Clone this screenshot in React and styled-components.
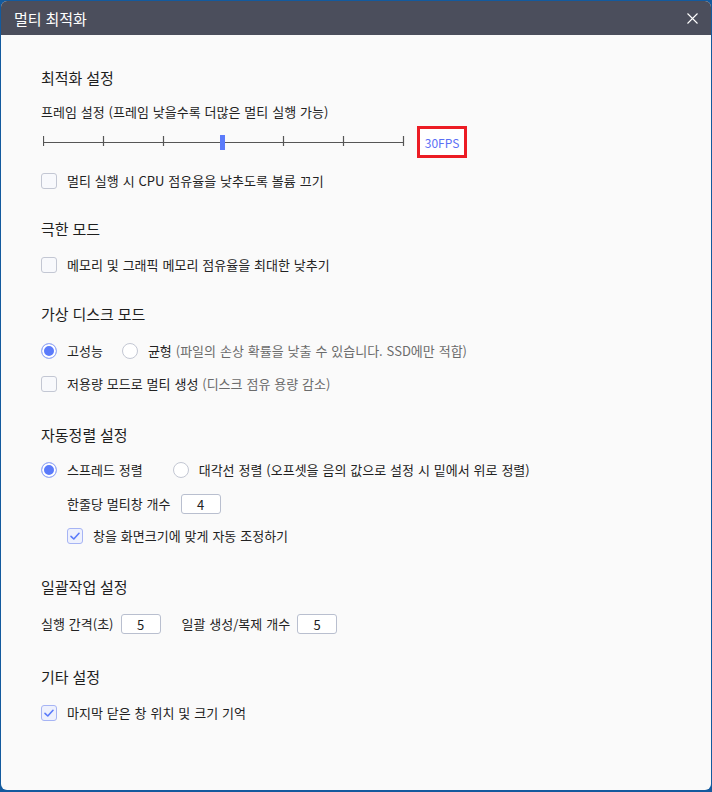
import React from "react";
import styled, { createGlobalStyle } from "styled-components";

const Global = createGlobalStyle`
  html, body { margin: 0; padding: 0; height: 100%; }
  #root { height: 100%; }
  body { font-family: "Noto Sans CJK KR", "Noto Sans", sans-serif; background: #135a9e; }
`;

const Frame = styled.div`
  box-sizing: border-box;
  height: 100vh;
  padding: 1px 1px 2px 1px;
  background: #135a9e;
  display: flex;
`;

const Window = styled.div`
  flex: 1;
  display: flex;
  flex-direction: column;
  background: #fafafa;
  border-radius: 6px;
  overflow: hidden;
`;

const TitleBar = styled.div`
  height: 34px;
  flex: none;
  background: #4b4e5c;
  display: flex;
  align-items: center;
  justify-content: space-between;
  padding: 0 13px 0 13px;
  color: #fff;
  font-size: 15px;
  word-spacing: 0.5px;
`;

const CloseBtn = styled.button`
  border: 0;
  background: transparent;
  padding: 0;
  width: 12px;
  height: 12px;
  display: flex;
  align-items: center;
  justify-content: center;
  cursor: pointer;
`;

const Content = styled.div`
  padding: 33px 40px 0 40px;
  display: flex;
  flex-direction: column;
  color: #222;
  font-size: 13px;
  word-spacing: 1px;
`;

const SectionTitle = styled.div`
  height: 20px;
  line-height: 20px;
  font-size: 15px;
  word-spacing: 0.5px;
  color: #1e1e1e;
  margin-top: ${(p) => p.$mt || 0}px;
`;

const Row = styled.div`
  display: flex;
  align-items: center;
  height: ${(p) => p.$h || 20}px;
  margin-top: ${(p) => p.$mt || 0}px;
  margin-left: ${(p) => p.$indent || 0}px;
  white-space: nowrap;
`;

const Text = styled.span`
  line-height: 20px;
  color: ${(p) => (p.$muted ? "#6b6b6b" : "#222")};
`;

const Box = styled.span`
  box-sizing: border-box;
  width: 16px;
  height: 16px;
  flex: none;
  border-radius: 3px;
  border: 1px solid ${(p) => (p.$checked ? "#a6b4f4" : "#c3c7d3")};
  background: ${(p) => (p.$checked ? "#eef1fd" : "#f8f9fc")};
  display: flex;
  align-items: center;
  justify-content: center;
  margin-right: 10px;
`;

const Radio = styled.span`
  box-sizing: border-box;
  width: 16px;
  height: 16px;
  flex: none;
  border-radius: 50%;
  border: 1px solid ${(p) => (p.$checked ? "#9fb0f5" : "#c3c7d3")};
  background: ${(p) => (p.$checked ? "#5b7bfa" : "#fff")};
  box-shadow: ${(p) => (p.$checked ? "inset 0 0 0 2px #fff" : "none")};
  margin-right: 10px;
`;

const RadioItem = styled.label`
  display: flex;
  align-items: center;
  margin-right: ${(p) => p.$gap || 0}px;
`;

const NumBox = styled.span`
  box-sizing: border-box;
  width: 40px;
  height: 20px;
  border: 1px solid #b9bfcf;
  border-radius: 3px;
  background: #fff;
  display: flex;
  align-items: center;
  justify-content: center;
  font-size: 13px;
  color: #222;
  margin-left: ${(p) => p.$ml || 0}px;
  margin-right: ${(p) => p.$mr || 0}px;
`;

const SliderWrap = styled.div`
  margin-left: 2px;
  width: 362px;
  height: 32px;
  display: flex;
`;

const FpsBox = styled.div`
  box-sizing: border-box;
  margin-left: 12px;
  width: 50px;
  height: 32px;
  border: 3px solid #ec1c24;
  background: #fff;
  color: #5b6ff5;
  font-size: 12px;
  word-spacing: 0;
  display: flex;
  align-items: center;
  justify-content: center;
`;

const Check = () => (
  <svg width="12" height="12" viewBox="0 0 12 12">
    <polyline points="2,6.3 4.8,9 10,3.3" fill="none" stroke="#5b7bfa" strokeWidth="1.6" strokeLinecap="round" strokeLinejoin="round" />
  </svg>
);

const Checkbox = ({ checked, children, indent, mt }) => (
  <Row $indent={indent} $mt={mt}>
    <Box $checked={checked}>{checked && <Check />}</Box>
    {children}
  </Row>
);

const Slider = () => {
  const ticks = [0, 1, 2, 3, 4, 5, 6];
  return (
    <SliderWrap>
      <svg width="362" height="32" viewBox="0 0 362 32">
        <line x1="0.5" y1="16.5" x2="360.5" y2="16.5" stroke="#555" strokeWidth="1.2" />
        {ticks.map((i) =>
          i === 3 ? null : (
            <line key={i} x1={i * 60 + 0.5} y1="10" x2={i * 60 + 0.5} y2="20" stroke="#555" strokeWidth="1.2" />
          )
        )}
        <rect x="177" y="9" width="5" height="15" fill="#5b7bfa" />
      </svg>
    </SliderWrap>
  );
};

export default function App() {
  return (
    <>
      <Global />
      <Frame>
        <Window>
          <TitleBar>
            <span>멀티 최적화</span>
            <CloseBtn aria-label="닫기">
              <svg width="11" height="11" viewBox="0 0 11 11">
                <path d="M0.5 0.5 L10.5 10.5 M10.5 0.5 L0.5 10.5" stroke="#fff" strokeWidth="1.1" />
              </svg>
            </CloseBtn>
          </TitleBar>
          <Content>
            <SectionTitle>최적화 설정</SectionTitle>
            <Row $mt={14}>
              <Text>프레임 설정 (프레임 낮을수록 더많은 멀티 실행 가능)</Text>
            </Row>
            <Row $mt={4} $h={32}>
              <Slider />
              <FpsBox>30FPS</FpsBox>
            </Row>
            <Checkbox mt={13}>
              <Text>멀티 실행 시 CPU 점유율을 낮추도록 볼륨 끄기</Text>
            </Checkbox>

            <SectionTitle $mt={28}>극한 모드</SectionTitle>
            <Checkbox mt={16}>
              <Text>메모리 및 그래픽 메모리 점유율을 최대한 낮추기</Text>
            </Checkbox>

            <SectionTitle $mt={29}>가상 디스크 모드</SectionTitle>
            <Row $mt={17}>
              <RadioItem $gap={19}>
                <Radio $checked />
                <Text>고성능</Text>
              </RadioItem>
              <RadioItem>
                <Radio />
                <Text>균형</Text>&nbsp;<Text $muted>(파일의 손상 확률을 낮출 수 있습니다. SSD에만 적합)</Text>
              </RadioItem>
            </Row>
            <Checkbox mt={13}>
              <Text>저용량 모드로 멀티 생성</Text>&nbsp;<Text $muted>(디스크 점유 용량 감소)</Text>
            </Checkbox>

            <SectionTitle $mt={31}>자동정렬 설정</SectionTitle>
            <Row $mt={15}>
              <RadioItem $gap={30}>
                <Radio $checked />
                <Text>스프레드 정렬</Text>
              </RadioItem>
              <RadioItem>
                <Radio />
                <Text>대각선 정렬 (오프셋을 음의 값으로 설정 시 밑에서 위로 정렬)</Text>
              </RadioItem>
            </Row>
            <Row $mt={14} $indent={26}>
              <Text>한줄당 멀티창 개수</Text>
              <NumBox $ml={10}>4</NumBox>
            </Row>
            <Checkbox mt={12} indent={26} checked>
              <Text>창을 화면크기에 맞게 자동 조정하기</Text>
            </Checkbox>

            <SectionTitle $mt={31}>일괄작업 설정</SectionTitle>
            <Row $mt={17}>
              <Text>실행 간격(초)</Text>
              <NumBox $ml={7} $mr={21}>5</NumBox>
              <Text>일괄 생성/복제 개수</Text>
              <NumBox $ml={7}>5</NumBox>
            </Row>

            <SectionTitle $mt={33}>기타 설정</SectionTitle>
            <Checkbox mt={16} checked>
              <Text>마지막 닫은 창 위치 및 크기 기억</Text>
            </Checkbox>
          </Content>
        </Window>
      </Frame>
    </>
  );
}
